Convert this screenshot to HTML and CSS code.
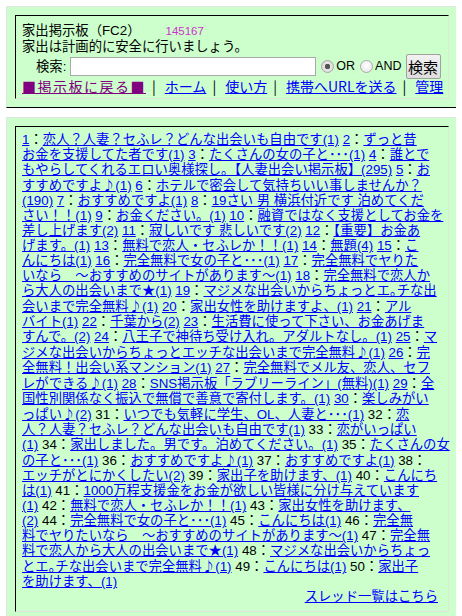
FILE: index.html
```html
<!DOCTYPE html>
<html lang="ja">
<head>
<meta charset="utf-8">
<title>家出掲示板（FC2）</title>
<link rel="stylesheet" href="styles.css">
</head>
<body>
<div class="box head">
  <div class="cell">
    <div class="title">家出掲示板（FC2）<span class="count">145167</span></div>
    <div class="lead">家出は計画的に安全に行いましょう。</div>
    <form class="search">
      <span class="search-label">検索:</span>
      <input type="text" class="q">
      <input type="radio" name="m" class="radio" checked><span class="opt">OR</span>
      <input type="radio" name="m" class="radio"><span class="opt">AND</span>
      <button type="button" class="btn">検索</button>
    </form>
    <div class="nav"><a class="visited back" href="#">■掲示板に戻る■</a><span class="sep">|</span><a href="#">ホーム</a><span class="sep">|</span><a href="#">使い方</a><span class="sep">|</span><a href="#">携帯へURLを送る</a><span class="sep">|</span><a href="#">管理</a></div>
  </div>
</div>
<div class="box list">
  <div class="cell">
    <p class="threads"><a href="#">1</a>：<a href="#">恋人？人妻？セふレ？どんな出会いも自由です(1)</a> <a href="#">2</a>：<a href="#">ずっと昔<br>お金を支援してた者です(1)</a> <a href="#">3</a>：<a href="#">たくさんの女の子と･･･(1)</a> <a href="#">4</a>：<a href="#">誰とで<br>もやらしてくれるエロい奥様探し。【人妻出会い掲示板】(295)</a> <a href="#">5</a>：<a href="#">お<br>すすめですよ<span class="sym">♪</span>(1)</a> <a href="#">6</a>：<a href="#">ホテルで密会して気持ちいい事しませんか？<br>(190)</a> <a href="#">7</a>：<a href="#">おすすめですよ(1)</a> <a href="#">8</a>：<a href="#">19さい 男 横浜付近です 泊めてくだ<br>さい！！(1)</a> <a href="#">9</a>：<a href="#">お金ください。(1)</a> <a href="#">10</a>：<a href="#">融資ではなく支援としてお金を<br>差し上げます(2)</a> <a href="#">11</a>：<a href="#">寂しいです 悲しいです(2)</a> <a href="#">12</a>：<a href="#">【重要】お金あ<br>げます。(1)</a> <a href="#">13</a>：<a href="#">無料で恋人・セふレか！！(1)</a> <a href="#">14</a>：<a href="#">無題(4)</a> <a href="#">15</a>：<a href="#">こ<br>んにちは(1)</a> <a href="#">16</a>：<a href="#">完全無料で女の子と･･･(1)</a> <a href="#">17</a>：<a href="#">完全無料でヤりた<br>いなら　～おすすめのサイトがあります～(1)</a> <a href="#">18</a>：<a href="#">完全無料で恋人か<br>ら大人の出会いまで★(1)</a> <a href="#">19</a>：<a href="#">マジメな出会いからちょっとエ｡チな出<br>会いまで完全無料<span class="sym">♪</span>(1)</a> <a href="#">20</a>：<a href="#">家出女性を助けますよ、(1)</a> <a href="#">21</a>：<a href="#">アル<br>バイト(1)</a> <a href="#">22</a>：<a href="#">千葉から(2)</a> <a href="#">23</a>：<a href="#">生活費に使って下さい、お金あげま<br>すんで。(2)</a> <a href="#">24</a>：<a href="#">八王子で神待ち受け入れ。アダルトなし。(1)</a> <a href="#">25</a>：<a href="#">マ<br>ジメな出会いからちょっとエッチな出会いまで完全無料<span class="sym">♪</span>(1)</a> <a href="#">26</a>：<a href="#">完<br>全無料！出会い系マンション(1)</a> <a href="#">27</a>：<a href="#">完全無料でメル友、恋人、セフ<br>レができる<span class="sym">♪</span>(1)</a> <a href="#">28</a>：<a href="#">SNS掲示板「ラブリーライン」(無料)(1)</a> <a href="#">29</a>：<a href="#">全<br>国性別関係なく振込で無償で善意で寄付します。(1)</a> <a href="#">30</a>：<a href="#">楽しみがい<br>っぱい<span class="sym">♪</span>(2)</a> 31：<a href="#">いつでも気軽に学生、OL、人妻と･･･(1)</a> 32：<a href="#">恋<br>人？人妻？セふレ？どんな出会いも自由です(1)</a> 33：<a href="#">恋がいっぱい<br>(1)</a> 34：<a href="#">家出しました。男です。泊めてください。(1)</a> 35：<a href="#">たくさんの女<br>の子と･･･(1)</a> 36：<a href="#">おすすめですよ<span class="sym">♪</span>(1)</a> 37：<a href="#">おすすめですよ(1)</a> 38：<br><a href="#">エッチがとにかくしたい(2)</a> 39：<a href="#">家出子を助けます、(1)</a> 40：<a href="#">こんにち<br>は(1)</a> 41：<a href="#">1000万程支援金をお金が欲しい皆様に分け与えています<br>(1)</a> 42：<a href="#">無料で恋人・セふレか！！(1)</a> 43：<a href="#">家出女性を助けます、<br>(2)</a> 44：<a href="#">完全無料で女の子と･･･(1)</a> 45：<a href="#">こんにちは(1)</a> 46：<a href="#">完全無<br>料でヤりたいなら　～おすすめのサイトがあります～(1)</a> 47：<a href="#">完全無<br>料で恋人から大人の出会いまで★(1)</a> 48：<a href="#">マジメな出会いからちょっ<br>とエ｡チな出会いまで完全無料<span class="sym">♪</span>(1)</a> 49：<a href="#">こんにちは(1)</a> 50：<a href="#">家出子<br>を助けます、(1)</a></p>
    <div class="more"><a href="#">スレッド一覧はこちら</a></div>
  </div>
</div>
</body>
</html>
```

FILE: styles.css
```css
body {
  margin: 6px;
  background: #ffffff;
  color: #000000;
  font-family: "Liberation Sans", "Noto Sans CJK JP", sans-serif;
  font-size: 13.33px;
  line-height: 15px;
}

a {
  color: #0000ff;
  text-decoration: underline;
}

a.visited {
  color: #800080;
}

.box {
  width: 452px;
  box-sizing: border-box;
  background: #ccffcc;
  border: 1px solid;
  border-color: #dfe6df #000000 #000000 #dfe6df;
  padding: 8px;
}

.cell {
  border: 1px solid;
  border-color: #000000 #dfe6df #dfe6df #000000;
  padding: 7px 6px 4px 6px;
}

.list {
  margin-top: 9px;
}

.list .cell {
  padding-top: 5px;
  padding-bottom: 7px;
}

.count {
  margin-left: 25px;
  color: #cc33cc;
  font-family: "Liberation Sans", Arial, sans-serif;
  font-size: 11.5px;
}

.search {
  margin: 0;
  display: flex;
  align-items: center;
  height: 25px;
  white-space: nowrap;
}

.search > * {
  flex-shrink: 0;
}

.search-label {
  margin-left: 14px;
  margin-right: 4px;
}

.q {
  width: 246px;
  height: 19px;
  box-sizing: border-box;
  margin: 0;
  border: 1px solid #a9a9a9;
  background: #ffffff;
}

.radio {
  appearance: none;
  -webkit-appearance: none;
  width: 13px;
  height: 13px;
  margin: 0 2px 0 5px;
  border: 1px solid #a8a8a8;
  border-radius: 50%;
  background: radial-gradient(circle at 50% 40%, #ffffff 0%, #e4e4e4 100%);
  box-sizing: border-box;
}

.radio:checked {
  background: radial-gradient(circle, #555555 0 2.5px, #e6e6e6 3px, #d6d6d6 100%);
}

.opt {
  font-family: "Liberation Sans", Arial, sans-serif;
  font-size: 12.5px;
}

.btn {
  margin-left: 4px;
  width: 35px;
  height: 25px;
  padding: 0;
  font-family: "Noto Sans CJK JP", sans-serif;
  font-size: 15px;
  line-height: 15px;
  color: #000000;
  background: linear-gradient(#f2f2f2, #dddddd);
  border: 1px solid #a0a0a0;
  border-radius: 2px;
}

.nav {
  font-family: "Noto Sans CJK JP", sans-serif;
  font-size: 14px;
  white-space: nowrap;
}

.back {
  letter-spacing: 1.5px;
}

.sep {
  margin: 0 9px 0 6px;
}

.threads {
  margin: 0;
  white-space: nowrap;
}

.sym {
  font-family: "Noto Sans CJK JP", sans-serif;
}

.more {
  text-align: right;
  padding-right: 4px;
}
```
